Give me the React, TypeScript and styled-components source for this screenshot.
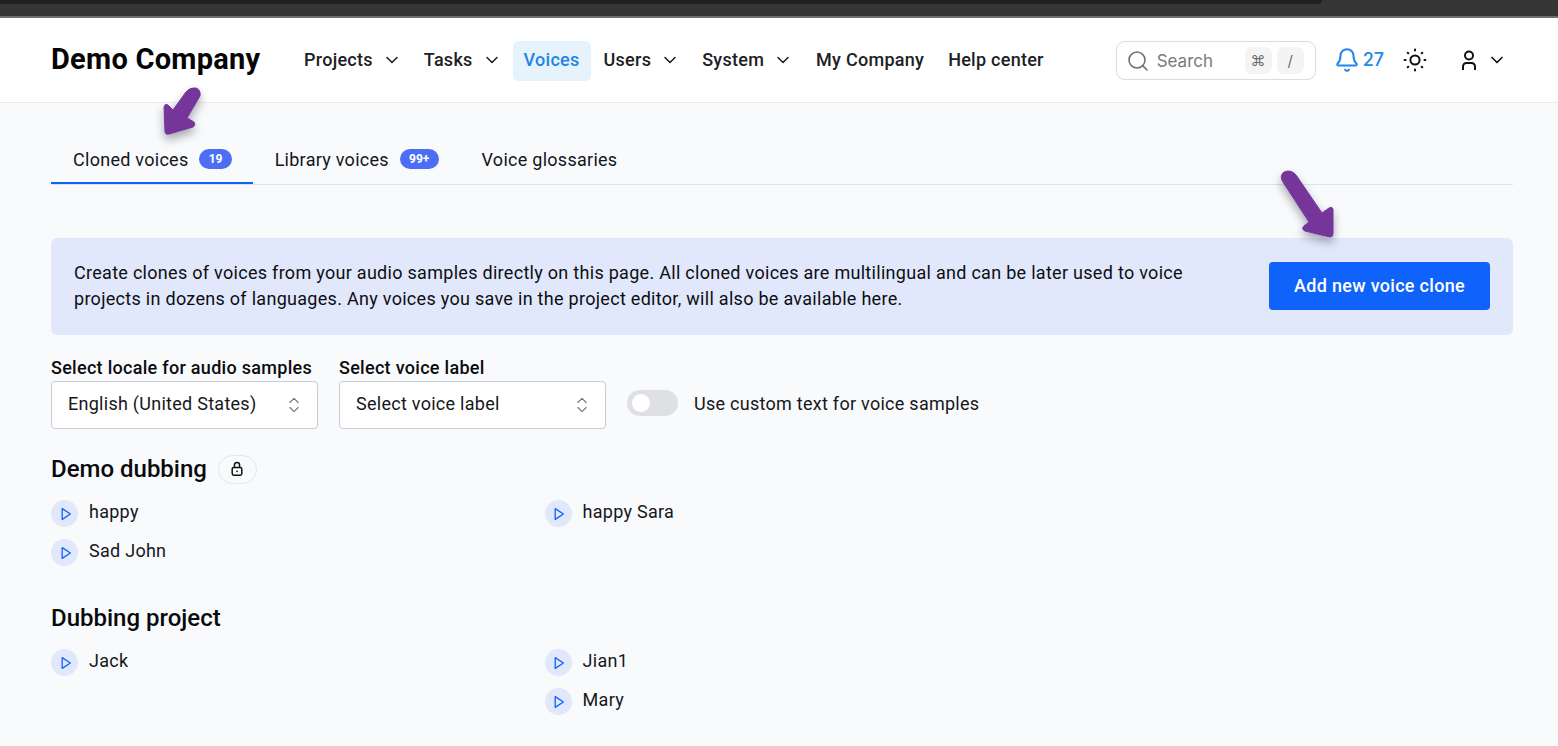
import * as React from 'react';
import styled, { createGlobalStyle } from 'styled-components';
import { Bell, ChevronDown, ChevronsUpDown, Search } from 'lucide-react';

const GlobalStyle = createGlobalStyle`
  html, body {
    margin: 0;
    padding: 0;
    height: 746px;
    overflow: hidden;
    background: #f9fafc;
  }
  body {
    font-family: Roboto, "Liberation Sans", sans-serif;
    letter-spacing: 0.27px;
    color: #0b0b0f;
  }
`;

const Page = styled.div`
  position: relative;
  width: 1558px;
  height: 746px;
  overflow: hidden;
`;

const BrowserEdge = styled.div`
  height: 18px;
  box-sizing: border-box;
  background: #363636;
  border-bottom: 2px solid #6f6f6f;
`;

const BrowserTab = styled.div`
  width: 1322px;
  height: 4px;
  background: #202124;
  border-bottom-right-radius: 10px;
`;

const Header = styled.header`
  height: 85px;
  box-sizing: border-box;
  display: flex;
  align-items: center;
  padding: 1px 51px 0 51px;
  background: #fff;
  border-bottom: 1px solid #ecedf0;
`;

const Logo = styled.div`
  width: 242px;
  padding-bottom: 4px;
  font-size: 29px;
  font-weight: 700;
  letter-spacing: 0.25px;
  color: #050505;
  flex: none;
`;

const Nav = styled.nav`
  display: flex;
  align-items: center;
  flex: 1;
`;

const NavItem = styled.div<{ $active?: boolean; $wide?: boolean }>`
  height: 40px;
  box-sizing: border-box;
  display: flex;
  align-items: center;
  gap: 9px;
  padding: 0 ${p => (p.$wide ? '12px' : '11px')} 2px;
  margin-right: ${p => (p.$active ? '2px' : '0')};
  font-size: 18px;
  font-weight: 500;
  border-radius: 5px;
  color: ${p => (p.$active ? '#1f84e6' : '#1d2026')};
  background: ${p => (p.$active ? '#e6f3fd' : 'transparent')};
`;

const SearchBox = styled.div`
  width: 200px;
  height: 39px;
  box-sizing: border-box;
  display: flex;
  align-items: center;
  padding: 0 11px 0 9px;
  border: 1px solid #d9dce0;
  border-radius: 9px;
  background: #fff;
  color: #7a7a7a;
  font-family: Inter, sans-serif;
  font-size: 17px;
  letter-spacing: 0;
  flex: none;
`;

const SearchLabel = styled.span`
  margin-left: 7px;
  flex: 1;
`;

const Key = styled.span`
  width: 27px;
  height: 27px;
  margin-left: 5px;
  border-radius: 7px;
  background: #f4f4f5;
  display: flex;
  align-items: center;
  justify-content: center;
  font-size: 15px;
  color: #6d6d6d;
`;

const Notifications = styled.div`
  display: flex;
  align-items: center;
  gap: 3px;
  margin: 0 0 2px 18px;
  color: #2188ea;
  font-family: Inter, sans-serif;
  font-size: 18px;
  font-weight: 500;
  letter-spacing: 0;
`;

const ThemeButton = styled.div`
  display: flex;
  margin: 0 0 2px 19px;
`;

const UserMenu = styled.div`
  display: flex;
  align-items: center;
  gap: 6px;
  margin: 0 0 2px 30px;
`;

const Main = styled.main`
  padding: 37px 45px 0 51px;
`;

const Tabs = styled.div`
  display: flex;
  height: 45px;
  box-sizing: border-box;
  border-bottom: 1px solid #e2e3e7;
`;

const Tab = styled.div<{ $active?: boolean }>`
  height: 44px;
  box-sizing: border-box;
  display: flex;
  align-items: center;
  gap: 11px;
  padding: 0 21px 4px 22px;
  font-size: 18px;
  color: #14151a;
  border-bottom: 2px solid ${p => (p.$active ? '#0f62fa' : 'transparent')};
`;

const Badge = styled.span`
  height: 20px;
  padding: 0 9.2px;
  display: flex;
  align-items: center;
  border-radius: 10px;
  background: #4c6ef5;
  color: #fff;
  font-size: 12px;
  font-weight: 700;
  letter-spacing: 0;
`;

const Banner = styled.section`
  height: 97px;
  box-sizing: border-box;
  margin-top: 53px;
  padding: 0 23px 1px;
  display: flex;
  align-items: center;
  justify-content: space-between;
  background: #e1e8fb;
  border-radius: 6px;
`;

const BannerText = styled.p`
  width: 1125px;
  margin: 0;
  font-size: 18px;
  line-height: 26px;
  letter-spacing: 0.29px;
  color: #0e0e12;
`;

const PrimaryButton = styled.button`
  width: 221px;
  height: 48px;
  padding: 0 0 2px;
  border: 0;
  border-radius: 4px;
  background: #0f62fa;
  color: #fff;
  font-family: inherit;
  font-size: 18px;
  font-weight: 500;
  letter-spacing: 0.3px;
`;

const Filters = styled.div`
  display: flex;
  align-items: flex-end;
  margin-top: 21px;
`;

const Field = styled.div`
  width: 267px;
  margin-right: 21px;
`;

const FieldLabel = styled.div`
  height: 25px;
  font-size: 18px;
  font-weight: 500;
  line-height: 24px;
  letter-spacing: 0.29px;
  white-space: nowrap;
`;

const Select = styled.div`
  height: 48px;
  box-sizing: border-box;
  display: flex;
  align-items: center;
  justify-content: space-between;
  padding: 0 13px 0 16px;
  background: #fff;
  border: 1px solid #c9ccd6;
  border-radius: 4px;
  font-size: 18px;
  color: #16171b;
`;

const RaisedText = styled.span`
  padding-bottom: 4px;
`;

const SwitchRow = styled.div`
  height: 48px;
  display: flex;
  align-items: center;
  gap: 16px;
  font-size: 18px;
  color: #16171b;
`;

const Switch = styled.div`
  width: 51px;
  height: 26px;
  box-sizing: border-box;
  padding: 4px 5px;
  margin-bottom: 4px;
  border-radius: 13px;
  background: #dfe0e4;
`;

const SwitchKnob = styled.div`
  width: 18px;
  height: 18px;
  border-radius: 50%;
  background: #fff;
`;

const Group = styled.section<{ $top: number }>`
  margin-top: ${p => p.$top}px;
`;

const GroupTitle = styled.h2`
  height: 30px;
  margin: 0;
  display: flex;
  align-items: center;
  gap: 11px;
  font-size: 24px;
  font-weight: 500;
  letter-spacing: 0;
  color: #0a0a0c;
`;

const LockPill = styled.span`
  width: 39px;
  height: 29px;
  box-sizing: border-box;
  display: flex;
  align-items: center;
  justify-content: center;
  border: 1px solid #e6e6ea;
  border-radius: 15px;
`;

const Columns = styled.div`
  display: grid;
  grid-template-columns: 493.6px 1fr;
  margin-top: 16px;
`;

const Column = styled.div`
  display: flex;
  flex-direction: column;
  gap: 12px;
`;

const VoiceRow = styled.div`
  height: 27px;
  display: flex;
  align-items: center;
  gap: 11px;
  font-size: 18px;
  color: #16171b;
`;

const PlayButton = styled.span`
  width: 27px;
  height: 27px;
  border-radius: 50%;
  background: #e1e8fb;
  display: flex;
  align-items: center;
  justify-content: center;
`;

const ArrowLayer = styled.svg`
  position: absolute;
  overflow: visible;
  filter: drop-shadow(0 5px 5px rgba(40, 40, 60, 0.4));
`;

const TabArrow = styled(ArrowLayer)`
  left: 155px;
  top: 80px;
`;

const ButtonArrow = styled(ArrowLayer)`
  left: 1270px;
  top: 160px;
`;

const Chevron = () => <ChevronDown size={20} strokeWidth={1.9} color="#1d2026" />;

const SunIcon = () => (
  <svg width="24" height="24" viewBox="0 0 24 24" fill="none" stroke="#111" strokeWidth="2" strokeLinecap="round">
    <circle cx="12" cy="12" r="4.6" />
    <path d="M12 1.6v1M12 21.4v1M1.6 12h1M21.4 12h1M4.7 4.7l.6.6M18.7 18.7l.6.6M4.7 19.3l.6-.6M18.7 5.3l.6-.6" />
  </svg>
);

const UserIcon = () => (
  <svg width="24" height="24" viewBox="0 0 24 24" fill="none" stroke="#111" strokeWidth="2">
    <circle cx="12" cy="7.5" r="4" />
    <path d="M6 22v-3.5a3.5 3.5 0 0 1 3.5-3.5h5a3.5 3.5 0 0 1 3.5 3.5V22" />
  </svg>
);

const LockIcon = () => (
  <svg width="14" height="16" viewBox="0 0 14 16" fill="none" stroke="#111" strokeWidth="1.5">
    <rect x="2.2" y="6.4" width="9.6" height="7.8" rx="1.6" />
    <path d="M4.4 6.4V4.2a2.6 2.6 0 0 1 5.2 0v2.2" />
    <circle cx="7" cy="10.3" r="0.9" fill="#111" stroke="none" />
  </svg>
);

const PlayIcon = () => (
  <svg width="14" height="16" viewBox="0 0 14 16" fill="none" stroke="#0f62fa" strokeWidth="1.3" strokeLinejoin="round">
    <path d="M4.2 2.6 L12.4 8 L4.2 13.4 Z" />
  </svg>
);

const Voice = ({ name }: { name: string }) => (
  <VoiceRow>
    <PlayButton>
      <PlayIcon />
    </PlayButton>
    <RaisedText>{name}</RaisedText>
  </VoiceRow>
);

const App = () => (
  <Page>
    <GlobalStyle />
    <BrowserEdge>
      <BrowserTab />
    </BrowserEdge>

    <Header>
      <Logo>Demo Company</Logo>
      <Nav>
        <NavItem>Projects <Chevron /></NavItem>
        <NavItem>Tasks <Chevron /></NavItem>
        <NavItem $active>Voices</NavItem>
        <NavItem>Users <Chevron /></NavItem>
        <NavItem>System <Chevron /></NavItem>
        <NavItem $wide>My Company</NavItem>
        <NavItem $wide>Help center</NavItem>
      </Nav>
      <SearchBox>
        <Search size={24} strokeWidth={1.6} color="#737373" />
        <SearchLabel>Search</SearchLabel>
        <Key>⌘</Key>
        <Key>/</Key>
      </SearchBox>
      <Notifications>
        <Bell size={26} strokeWidth={1.9} />
        27
      </Notifications>
      <ThemeButton>
        <SunIcon />
      </ThemeButton>
      <UserMenu>
        <UserIcon />
        <ChevronDown size={20} strokeWidth={2} color="#111" />
      </UserMenu>
    </Header>

    <Main>
      <Tabs>
        <Tab $active>Cloned voices <Badge>19</Badge></Tab>
        <Tab>Library voices <Badge>99+</Badge></Tab>
        <Tab>Voice glossaries</Tab>
      </Tabs>

      <Banner>
        <BannerText>
          Create clones of voices from your audio samples directly on this page. All cloned voices are multilingual and
          can be later used to voice projects in dozens of languages. Any voices you save in the project editor, will
          also be available here.
        </BannerText>
        <PrimaryButton>Add new voice clone</PrimaryButton>
      </Banner>

      <Filters>
        <Field>
          <FieldLabel>Select locale for audio samples</FieldLabel>
          <Select>
            <RaisedText>English (United States)</RaisedText>
            <ChevronsUpDown size={20} strokeWidth={1.3} color="#777" />
          </Select>
        </Field>
        <Field>
          <FieldLabel>Select voice label</FieldLabel>
          <Select>
            <RaisedText>Select voice label</RaisedText>
            <ChevronsUpDown size={20} strokeWidth={1.3} color="#777" />
          </Select>
        </Field>
        <SwitchRow>
          <Switch>
            <SwitchKnob />
          </Switch>
          <RaisedText>Use custom text for voice samples</RaisedText>
        </SwitchRow>
      </Filters>

      <Group $top={25}>
        <GroupTitle>
          Demo dubbing
          <LockPill>
            <LockIcon />
          </LockPill>
        </GroupTitle>
        <Columns>
          <Column>
            <Voice name="happy" />
            <Voice name="Sad John" />
          </Column>
          <Column>
            <Voice name="happy Sara" />
          </Column>
        </Columns>
      </Group>

      <Group $top={37}>
        <GroupTitle>Dubbing project</GroupTitle>
        <Columns>
          <Column>
            <Voice name="Jack" />
          </Column>
          <Column>
            <Voice name="Jian1" />
            <Voice name="Mary" />
          </Column>
        </Columns>
      </Group>
    </Main>

    <TabArrow width="50" height="60" viewBox="155 80 50 60">
      <path
        d="M186 92 Q190 87 196 88 Q201 90 200 96 L187 118 L194 122 Q196 125 193 127 L169 134 Q165 135 165 131 L164 107 Q165 103 168 105 L173 110 Z"
        fill="#76359b"
        stroke="#76359b"
        strokeWidth="1"
        strokeLinejoin="round"
      />
    </TabArrow>
    <ButtonArrow width="70" height="80" viewBox="1270 160 70 80">
      <path
        d="M1283 182 L1309 222 L1304 226 Q1301 229 1305 231 L1330 237 Q1333 237 1333 234 L1333 209 Q1332 206 1329 208 L1322 213 L1296 175 Q1291 169 1284 172 Q1279 176 1283 182 Z"
        fill="#76359b"
        stroke="#76359b"
        strokeWidth="1"
        strokeLinejoin="round"
      />
    </ButtonArrow>
  </Page>
);

export default App;
